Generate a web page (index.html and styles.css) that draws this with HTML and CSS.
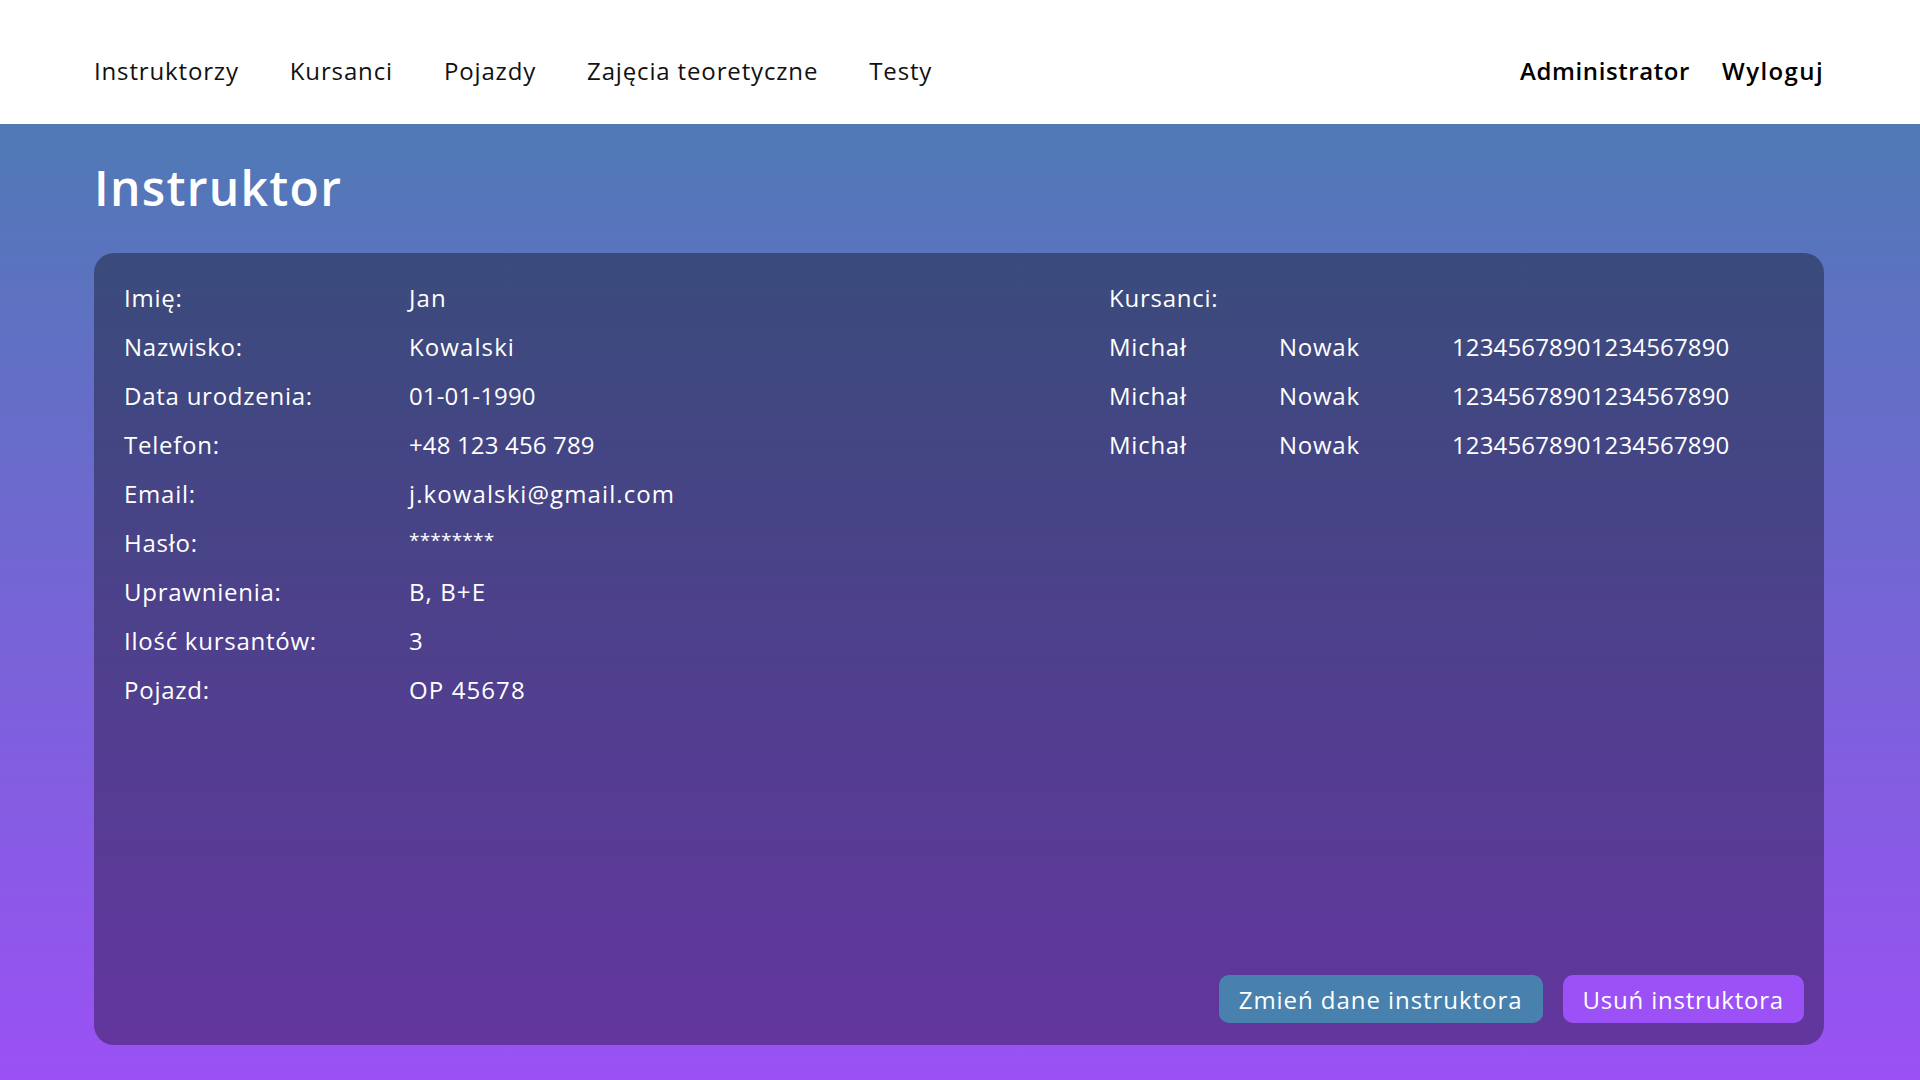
FILE: index.html
```html
<!DOCTYPE html>
<html lang="pl">
<head>
<meta charset="utf-8">
<title>Instruktor</title>
<link rel="stylesheet" href="styles.css">
</head>
<body>
<header class="topbar">
  <nav class="nav-main">
    <a class="nav-link" href="#">Instruktorzy</a>
    <a class="nav-link" href="#">Kursanci</a>
    <a class="nav-link" href="#">Pojazdy</a>
    <a class="nav-link" href="#">Zajęcia teoretyczne</a>
    <a class="nav-link" href="#">Testy</a>
  </nav>
  <nav class="nav-user">
    <a class="nav-link strong" href="#">Administrator</a>
    <a class="nav-link strong wide" href="#">Wyloguj</a>
  </nav>
</header>
<main class="page">
  <h1 class="page-title">Instruktor</h1>
  <section class="card">
    <div class="card-body">
      <dl class="details">
        <dt>Imię:</dt><dd>Jan</dd>
        <dt>Nazwisko:</dt><dd>Kowalski</dd>
        <dt>Data urodzenia:</dt><dd class="num">01-01-1990</dd>
        <dt>Telefon:</dt><dd class="num">+48 123 456 789</dd>
        <dt>Email:</dt><dd>j.kowalski@gmail.com</dd>
        <dt>Hasło:</dt><dd class="pw">********</dd>
        <dt>Uprawnienia:</dt><dd>B, B+E</dd>
        <dt>Ilość kursantów:</dt><dd class="num">3</dd>
        <dt>Pojazd:</dt><dd>OP 45678</dd>
      </dl>
      <div class="students">
        <div class="students-title">Kursanci:</div>
        <div class="student"><span>Michał</span><span>Nowak</span><span class="num">12345678901234567890</span></div>
        <div class="student"><span>Michał</span><span>Nowak</span><span class="num">12345678901234567890</span></div>
        <div class="student"><span>Michał</span><span>Nowak</span><span class="num">12345678901234567890</span></div>
      </div>
    </div>
    <div class="actions">
      <button class="btn btn-edit">Zmień dane instruktora</button>
      <button class="btn btn-delete">Usuń instruktora</button>
    </div>
  </section>
</main>
</body>
</html>
```

FILE: styles.css
```css
* { box-sizing: border-box; }

html, body {
  margin: 0;
  padding: 0;
}

body {
  font-family: "Open Sans", "Noto Sans", sans-serif;
  font-size: 24px;
  color: #111;
  background: #9b51f5;
}

.topbar {
  height: 124px;
  background: #ffffff;
  display: flex;
  justify-content: space-between;
  align-items: flex-start;
  padding: 55px 96px 0 94px;
}

.nav-main,
.nav-user {
  display: flex;
  line-height: 32px;
}

.nav-main { gap: 51px; }
.nav-user { gap: 32px; }

.nav-link {
  color: #111;
  text-decoration: none;
  letter-spacing: 0.85px;
}

.nav-link.strong {
  font-weight: 600;
  color: #000;
  letter-spacing: 0.6px;
}

.nav-link.strong.wide {
  letter-spacing: 1.4px;
}

.page {
  min-height: calc(100vh - 124px);
  background: linear-gradient(180deg, #4f79b5 0%, #9b51f5 100%);
  padding: 0 96px 35px 94px;
  display: flex;
  flex-direction: column;
}

.page-title {
  margin: 0;
  padding: 35px 0 36px 0;
  font-size: 48px;
  line-height: 58px;
  font-weight: 600;
  color: #ffffff;
  letter-spacing: 1.3px;
}

.card {
  height: 792px;
  border-radius: 20px;
  background: rgba(0, 0, 0, 0.35);
  padding: 20px 20px 22px 20px;
  display: flex;
  flex-direction: column;
  color: #ffffff;
}

.card-body {
  flex: 1;
  display: grid;
  grid-template-columns: 985px 1fr;
  padding: 10px 10px 0 10px;
  align-items: start;
}

.details {
  margin: 0;
  display: grid;
  grid-template-columns: 285px 1fr;
  row-gap: 20px;
  line-height: 29px;
}

.details dt,
.details dd {
  margin: 0;
  letter-spacing: 0.75px;
}

.details dd {
  letter-spacing: 1.1px;
}

.details dd.num,
.students .num {
  letter-spacing: 0.15px;
}

.details dd.pw {
  font-size: 19px;
  line-height: 24px;
  letter-spacing: 0.2px;
}

.students {
  display: grid;
  row-gap: 20px;
  line-height: 29px;
  letter-spacing: 0.75px;
}

.student {
  display: grid;
  grid-template-columns: 170px 173px auto;
}

.actions {
  display: flex;
  justify-content: flex-end;
  gap: 20px;
}

.btn {
  font-family: inherit;
  font-size: 24px;
  height: 48px;
  padding: 0 20px;
  border: none;
  border-radius: 10px;
  color: #ffffff;
  letter-spacing: 0.95px;
  cursor: pointer;
}

.btn-edit { background: #4881ae; }
.btn-delete { background: #9c51f7; letter-spacing: 0.8px; }
```
